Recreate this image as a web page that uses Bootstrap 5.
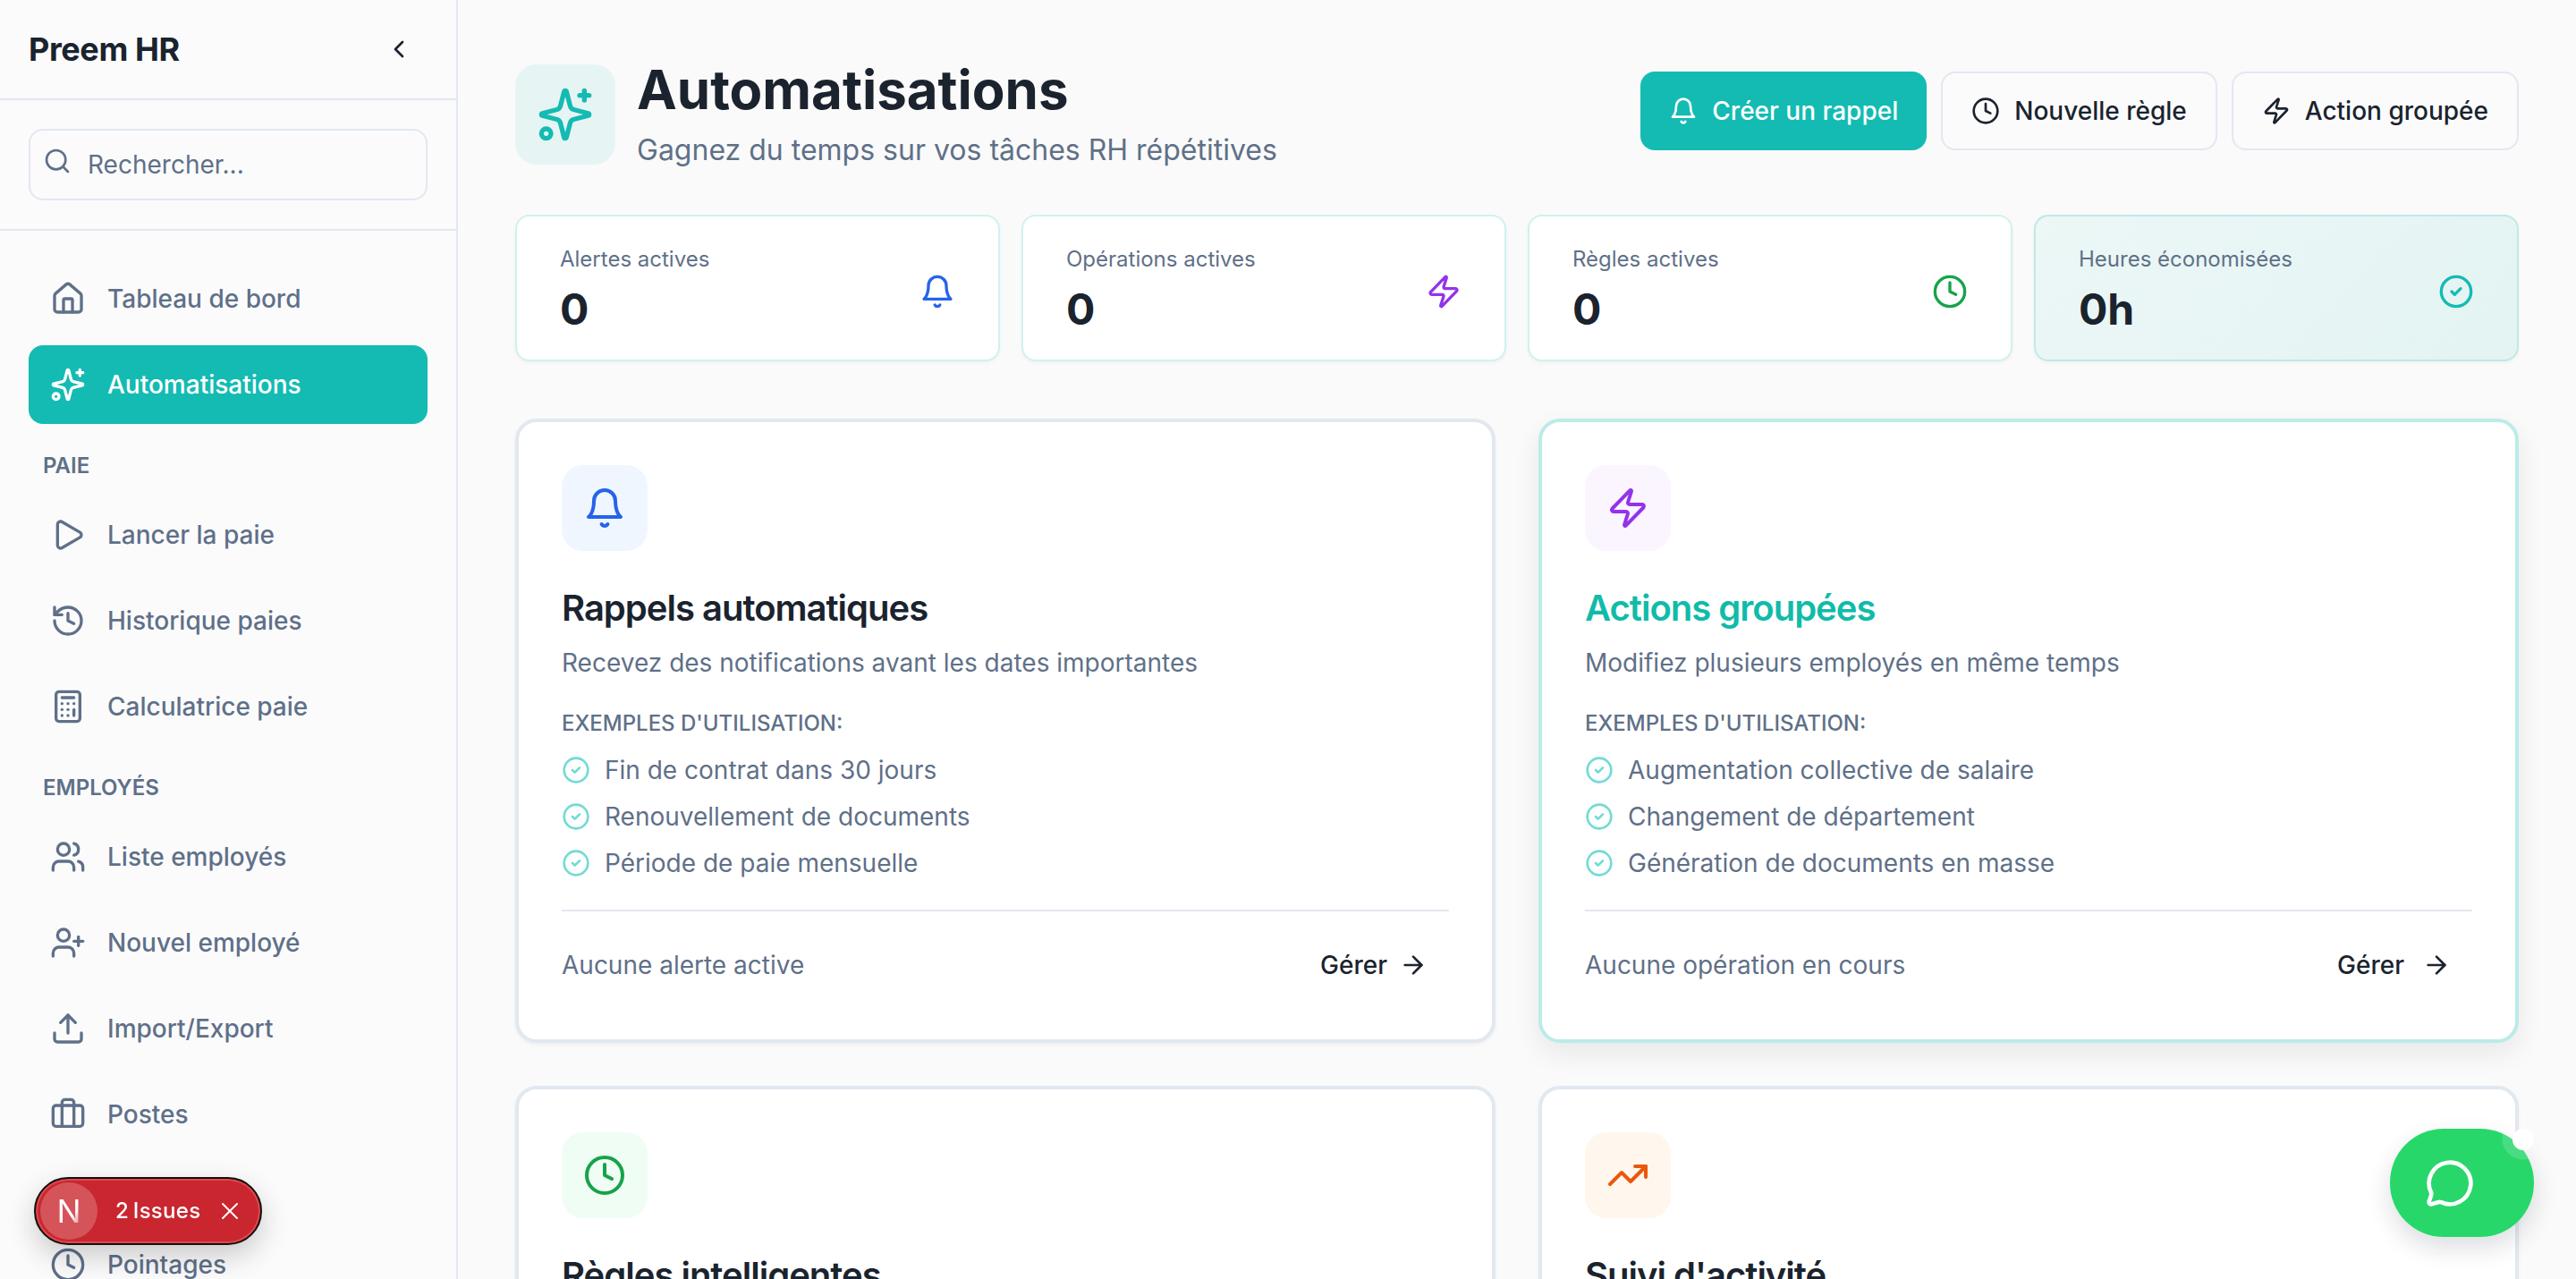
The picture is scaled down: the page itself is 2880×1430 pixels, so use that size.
<!DOCTYPE html>
<html lang="fr">
<head>
  <meta charset="UTF-8">
  <meta name="viewport" content="width=device-width, initial-scale=1">
  <link href="https://cdn.jsdelivr.net/npm/bootstrap@5.3.0/dist/css/bootstrap.min.css" rel="stylesheet">
  <title>Preem HR - Automatisations</title>
  <style>
    html, body { height: 100%; }
    body {
      background: #fafafa;
      color: #1a232e;
      font-family: Inter, "Liberation Sans", sans-serif;
      overflow: hidden;
    }
    .ico { fill: none; stroke: currentColor; stroke-width: 2; stroke-linecap: round; stroke-linejoin: round; flex-shrink: 0; }
    .ico-32 { width: 32px; height: 32px; }
    .ico-40 { width: 40px; height: 40px; }
    .ico-48 { width: 48px; height: 48px; }
    .ico-56 { width: 56px; height: 56px; }
    .ico-64 { width: 64px; height: 64px; }
    .ico-thin { stroke-width: 1.5; }
    .tone-blue { color: #2563eb; }
    .tone-purple { color: #9333ea; }
    .tone-green { color: #16a34a; }
    .tone-teal { color: #14bbb3; }

    /* sidebar */
    .side-panel { width: 512px; height: 1430px; border-right: 2px solid #e2e8f0; background: #fbfbfc; overflow: hidden; }
    .side-head { height: 112px; padding: 0 48px 0 32px; border-bottom: 2px solid #e2e8f0; }
    .side-brand { font-size: 36px; font-weight: 700; letter-spacing: -0.4px; }
    .side-search { height: 146px; padding: 32px; border-bottom: 2px solid #e2e8f0; }
    .search-box { height: 80px; border: 2px solid #e2e8f0; border-radius: 16px; padding-left: 14px; gap: 18px; color: #5f7088; font-size: 28px; }
    .search-box .ico { width: 32px; height: 32px; margin-top: -8px; }
    .side-nav { padding: 32px 32px 0; }
    .nav-entry { height: 88px; padding: 0 24px; gap: 24px; margin-bottom: 8px; border-radius: 16px; color: #5f7088; font-size: 28px; font-weight: 500; text-decoration: none; }
    .nav-entry.is-active { background: #14bbb3; color: #fff; }
    .nav-title { height: 40px; margin: 27px 0 13px; padding-left: 16px; font-size: 24px; line-height: 40px; font-weight: 600; color: #5f7088; }

    /* main */
    .main-area { padding: 72px 64px 0; height: 1430px; overflow: hidden; }
    .head-icon { width: 112px; height: 112px; border-radius: 24px; background: #e6f5f4; color: #14bbb3; }
    .page-title { font-size: 60px; line-height: 72px; font-weight: 700; margin: -8px 0 0; }
    .page-sub { font-size: 32px; line-height: 48px; color: #5f7088; margin: 8px 0 0; }
    .act-btn { height: 88px; padding: 0 32px; gap: 16px; font-size: 28px; font-weight: 500; border: 2px solid #e2e8f0; border-radius: 16px; background: #fbfbfc; color: #1a232e; margin-top: 8px; }
    .act-btn.is-main { background: #14bbb3; border: 0; color: #fff; }
    .stat-grid { display: grid; grid-template-columns: repeat(4, 1fr); gap: 24px; margin-top: 48px; }
    .stat-box { height: 164px; border: 2px solid #d0f1ef; border-radius: 16px; background: #fff; padding: 32px 48px 0; box-shadow: 0 2px 4px rgba(15, 23, 42, .04); }
    .stat-box.is-tint { background: linear-gradient(135deg, #ecf7f6, #e3f4f3); border-color: #bfe9e7; }
    .stat-label { font-size: 24px; line-height: 32px; color: #5f7088; }
    .stat-value { font-size: 48px; line-height: 64px; font-weight: 700; margin-top: 8px; }
    .stat-box .ico { margin-top: 32px; }
    .tool-grid { display: grid; grid-template-columns: repeat(2, 1fr); gap: 48px; margin-top: 64px; }
    .tool-box { height: 698px; border: 4px solid #e2e8f0; border-radius: 24px; background: #fff; padding: 48px; box-shadow: 0 2px 4px rgba(15, 23, 42, .05); }
    .tool-box.is-hover { border-color: #bcebe8; box-shadow: 0 12px 30px rgba(15, 23, 42, .08); }
    .tool-icon { width: 96px; height: 96px; border-radius: 24px; }
    .tint-blue { background: #eff6ff; color: #2563eb; }
    .tint-purple { background: #faf5ff; color: #9333ea; }
    .tint-green { background: #f0fdf4; color: #16a34a; }
    .tint-orange { background: #fff7ed; color: #ea580c; }
    .tool-title { font-size: 40px; line-height: 56px; font-weight: 600; letter-spacing: -1px; margin: 36px 0 0; }
    .tool-box.is-hover .tool-title { color: #10bba9; }
    .tool-desc { font-size: 28px; line-height: 40px; color: #5f7088; margin: 13px 0 0; }
    .tool-eyebrow { font-size: 24px; line-height: 32px; font-weight: 500; color: #5f7088; text-transform: uppercase; margin-top: 32px; }
    .tool-list { list-style: none; padding: 0; margin: 10px 0 0; }
    .tool-list li { height: 52px; gap: 16px; font-size: 28px; color: #5f7088; }
    .tool-list .ico { color: #72dbd5; }
    .tool-foot { border-top: 2px solid #e2e8f0; margin-top: 26px; padding-top: 28px; font-size: 28px; color: #5f7088; }
    .tool-link { height: 64px; padding: 0 24px; gap: 13px; color: #1a232e; font-weight: 500; text-decoration: none; }
    .tool-box.is-hover .tool-link { gap: 20px; }

    /* floating */
    .issue-pill { position: fixed; left: 38px; top: 1316px; width: 255px; height: 76px; border-radius: 38px; background: #c9262f; border: 2px solid #111; box-shadow: inset 0 0 0 2px #e0484f, 0 12px 32px rgba(0, 0, 0, .2); color: #fff; padding-left: 5px; font-size: 24px; font-weight: 500; }
    .issue-logo { width: 64px; height: 64px; border-radius: 50%; background: #d5545a; margin-right: 20px; }
    .issue-n { font-size: 36px; font-weight: 400; background: linear-gradient(125deg, #fff 62%, rgba(255, 255, 255, .25) 85%); -webkit-background-clip: text; background-clip: text; -webkit-text-fill-color: transparent; }
    .issue-count { letter-spacing: .3px; word-spacing: -2px; margin-right: 17px; }
    .chat-fab { position: fixed; left: 2672px; top: 1262px; width: 161px; height: 121px; border-radius: 60px; background: radial-gradient(circle at 149px 11px, #48dd82 23px, #28d76a 24px); color: #fff; box-shadow: 0 12px 28px rgba(15, 23, 42, .14); padding-left: 39px; }
    .chat-fab::after { content: ""; position: absolute; right: 0; top: 0; width: 24px; height: 24px; border-radius: 50%; background: #fff; }
  </style>
</head>
<body>

<svg width="0" height="0" class="position-absolute">
  <symbol id="i-home" viewBox="0 0 24 24"><path d="M15 21v-8a1 1 0 0 0-1-1h-4a1 1 0 0 0-1 1v8"/><path d="M3 10a2 2 0 0 1 .709-1.528l7-5.999a2 2 0 0 1 2.582 0l7 5.999A2 2 0 0 1 21 10v9a2 2 0 0 1-2 2H5a2 2 0 0 1-2-2z"/></symbol>
  <symbol id="i-sparkles" viewBox="0 0 24 24"><path d="M9.937 15.5A2 2 0 0 0 8.5 14.063l-6.135-1.582a.5.5 0 0 1 0-.962L8.5 9.936A2 2 0 0 0 9.937 8.5l1.582-6.135a.5.5 0 0 1 .963 0L14.063 8.5A2 2 0 0 0 15.5 9.937l6.135 1.581a.5.5 0 0 1 0 .964L15.5 14.063a2 2 0 0 0-1.437 1.437l-1.582 6.135a.5.5 0 0 1-.963 0z"/><path d="M20 2v4"/><path d="M22 4h-4"/><circle cx="4" cy="20" r="2"/></symbol>
  <symbol id="i-play" viewBox="0 0 24 24"><path d="M5 5a2 2 0 0 1 3.008-1.728l11.997 6.998a2 2 0 0 1 .003 3.458l-12 7A2 2 0 0 1 5 19z"/></symbol>
  <symbol id="i-history" viewBox="0 0 24 24"><path d="M3 12a9 9 0 1 0 9-9 9.75 9.75 0 0 0-6.74 2.74L3 8"/><path d="M3 3v5h5"/><path d="M12 7v5l4 2"/></symbol>
  <symbol id="i-calc" viewBox="0 0 24 24"><rect width="16" height="20" x="4" y="2" rx="2"/><line x1="8" x2="16" y1="6" y2="6"/><line x1="16" x2="16" y1="14" y2="18"/><path d="M16 10h.01"/><path d="M12 10h.01"/><path d="M8 10h.01"/><path d="M12 14h.01"/><path d="M8 14h.01"/><path d="M12 18h.01"/><path d="M8 18h.01"/></symbol>
  <symbol id="i-users" viewBox="0 0 24 24"><path d="M16 21v-2a4 4 0 0 0-4-4H6a4 4 0 0 0-4 4v2"/><circle cx="9" cy="7" r="4"/><path d="M22 21v-2a4 4 0 0 0-3-3.87"/><path d="M16 3.13a4 4 0 0 1 0 7.75"/></symbol>
  <symbol id="i-userplus" viewBox="0 0 24 24"><path d="M16 21v-2a4 4 0 0 0-4-4H6a4 4 0 0 0-4 4v2"/><circle cx="9" cy="7" r="4"/><line x1="19" x2="19" y1="8" y2="14"/><line x1="22" x2="16" y1="11" y2="11"/></symbol>
  <symbol id="i-upload" viewBox="0 0 24 24"><path d="M21 15v4a2 2 0 0 1-2 2H5a2 2 0 0 1-2-2v-4"/><polyline points="17 8 12 3 7 8"/><line x1="12" x2="12" y1="3" y2="15"/></symbol>
  <symbol id="i-case" viewBox="0 0 24 24"><path d="M16 20V4a2 2 0 0 0-2-2h-4a2 2 0 0 0-2 2v16"/><rect width="20" height="14" x="2" y="6" rx="2"/></symbol>
  <symbol id="i-clock" viewBox="0 0 24 24"><circle cx="12" cy="12" r="10"/><polyline points="12 6 12 12 16 14"/></symbol>
  <symbol id="i-bell" viewBox="0 0 24 24"><path d="M6 8a6 6 0 0 1 12 0c0 7 3 9 3 9H3s3-2 3-9"/><path d="M10.3 21a1.94 1.94 0 0 0 3.4 0"/></symbol>
  <symbol id="i-zap" viewBox="0 0 24 24"><path d="M4 14a1 1 0 0 1-.78-1.63l9.9-10.2a.5.5 0 0 1 .86.46l-1.92 6.02A1 1 0 0 0 13 10h7a1 1 0 0 1 .78 1.63l-9.9 10.2a.5.5 0 0 1-.86-.46l1.92-6.02A1 1 0 0 0 11 14z"/></symbol>
  <symbol id="i-check" viewBox="0 0 24 24"><circle cx="12" cy="12" r="10"/><path d="m9 12 2 2 4-4"/></symbol>
  <symbol id="i-arrow" viewBox="0 0 24 24"><path d="M5 12h14"/><path d="m12 5 7 7-7 7"/></symbol>
  <symbol id="i-trend" viewBox="0 0 24 24"><polyline points="22 7 13.5 15.5 8.5 10.5 2 17"/><polyline points="16 7 22 7 22 13"/></symbol>
  <symbol id="i-chat" viewBox="0 0 24 24"><path d="M2.992 16.342a2 2 0 0 1 .094 1.167l-1.065 3.29a1 1 0 0 0 1.236 1.168l3.413-.998a2 2 0 0 1 1.099.092 10 10 0 1 0-4.777-4.719"/></symbol>
  <symbol id="i-search" viewBox="0 0 24 24"><circle cx="11" cy="11" r="8"/><path d="m21 21-4.3-4.3"/></symbol>
  <symbol id="i-chevron" viewBox="0 0 24 24"><path d="m15 18-6-6 6-6"/></symbol>
  <symbol id="i-x" viewBox="0 0 24 24"><path d="M18 6 6 18"/><path d="m6 6 12 12"/></symbol>
</svg>

<div class="d-flex">
  <aside class="side-panel flex-shrink-0">
    <div class="side-head d-flex align-items-center justify-content-between">
      <span class="side-brand">Preem HR</span>
      <svg class="ico ico-32"><use href="#i-chevron"/></svg>
    </div>
    <div class="side-search">
      <div class="search-box d-flex align-items-center">
        <svg class="ico"><use href="#i-search"/></svg>
        <span>Rechercher...</span>
      </div>
    </div>
    <nav class="side-nav">
      <a class="nav-entry d-flex align-items-center" href="#"><svg class="ico ico-40"><use href="#i-home"/></svg>Tableau de bord</a>
      <a class="nav-entry is-active d-flex align-items-center" href="#"><svg class="ico ico-40"><use href="#i-sparkles"/></svg>Automatisations</a>
      <div class="nav-title">PAIE</div>
      <a class="nav-entry d-flex align-items-center" href="#"><svg class="ico ico-40"><use href="#i-play"/></svg>Lancer la paie</a>
      <a class="nav-entry d-flex align-items-center" href="#"><svg class="ico ico-40"><use href="#i-history"/></svg>Historique paies</a>
      <a class="nav-entry d-flex align-items-center" href="#"><svg class="ico ico-40"><use href="#i-calc"/></svg>Calculatrice paie</a>
      <div class="nav-title">EMPLOYÉS</div>
      <a class="nav-entry d-flex align-items-center" href="#"><svg class="ico ico-40"><use href="#i-users"/></svg>Liste employés</a>
      <a class="nav-entry d-flex align-items-center" href="#"><svg class="ico ico-40"><use href="#i-userplus"/></svg>Nouvel employé</a>
      <a class="nav-entry d-flex align-items-center" href="#"><svg class="ico ico-40"><use href="#i-upload"/></svg>Import/Export</a>
      <a class="nav-entry d-flex align-items-center" href="#"><svg class="ico ico-40"><use href="#i-case"/></svg>Postes</a>
      <div class="nav-title"></div>
      <a class="nav-entry d-flex align-items-center" href="#"><svg class="ico ico-40"><use href="#i-clock"/></svg>Pointages</a>
    </nav>
  </aside>

  <main class="main-area flex-grow-1">
    <div class="d-flex justify-content-between align-items-start">
      <div class="d-flex gap-4">
        <div class="head-icon d-flex align-items-center justify-content-center"><svg class="ico ico-64"><use href="#i-sparkles"/></svg></div>
        <div>
          <h1 class="page-title">Automatisations</h1>
          <p class="page-sub">Gagnez du temps sur vos tâches RH répétitives</p>
        </div>
      </div>
      <div class="d-flex gap-3">
        <button class="act-btn is-main d-flex align-items-center" type="button"><svg class="ico ico-32"><use href="#i-bell"/></svg>Créer un rappel</button>
        <button class="act-btn d-flex align-items-center" type="button"><svg class="ico ico-32"><use href="#i-clock"/></svg>Nouvelle règle</button>
        <button class="act-btn d-flex align-items-center" type="button"><svg class="ico ico-32"><use href="#i-zap"/></svg>Action groupée</button>
      </div>
    </div>

    <div class="stat-grid">
      <div class="stat-box d-flex justify-content-between align-items-start">
        <div><div class="stat-label">Alertes actives</div><div class="stat-value">0</div></div>
        <svg class="ico ico-40 tone-blue"><use href="#i-bell"/></svg>
      </div>
      <div class="stat-box d-flex justify-content-between align-items-start">
        <div><div class="stat-label">Opérations actives</div><div class="stat-value">0</div></div>
        <svg class="ico ico-40 tone-purple"><use href="#i-zap"/></svg>
      </div>
      <div class="stat-box d-flex justify-content-between align-items-start">
        <div><div class="stat-label">Règles actives</div><div class="stat-value">0</div></div>
        <svg class="ico ico-40 tone-green"><use href="#i-clock"/></svg>
      </div>
      <div class="stat-box is-tint d-flex justify-content-between align-items-start">
        <div><div class="stat-label">Heures économisées</div><div class="stat-value">0h</div></div>
        <svg class="ico ico-40 tone-teal"><use href="#i-check"/></svg>
      </div>
    </div>

    <div class="tool-grid">
      <div class="tool-box">
        <div class="tool-icon tint-blue d-flex align-items-center justify-content-center"><svg class="ico ico-48"><use href="#i-bell"/></svg></div>
        <h2 class="tool-title">Rappels automatiques</h2>
        <p class="tool-desc">Recevez des notifications avant les dates importantes</p>
        <div class="tool-eyebrow">Exemples d'utilisation:</div>
        <ul class="tool-list">
          <li class="d-flex align-items-center"><svg class="ico ico-32"><use href="#i-check"/></svg>Fin de contrat dans 30 jours</li>
          <li class="d-flex align-items-center"><svg class="ico ico-32"><use href="#i-check"/></svg>Renouvellement de documents</li>
          <li class="d-flex align-items-center"><svg class="ico ico-32"><use href="#i-check"/></svg>Période de paie mensuelle</li>
        </ul>
        <div class="tool-foot d-flex justify-content-between align-items-center">
          <span>Aucune alerte active</span>
          <a class="tool-link d-flex align-items-center" href="#">Gérer<svg class="ico ico-32"><use href="#i-arrow"/></svg></a>
        </div>
      </div>
      <div class="tool-box is-hover">
        <div class="tool-icon tint-purple d-flex align-items-center justify-content-center"><svg class="ico ico-48"><use href="#i-zap"/></svg></div>
        <h2 class="tool-title">Actions groupées</h2>
        <p class="tool-desc">Modifiez plusieurs employés en même temps</p>
        <div class="tool-eyebrow">Exemples d'utilisation:</div>
        <ul class="tool-list">
          <li class="d-flex align-items-center"><svg class="ico ico-32"><use href="#i-check"/></svg>Augmentation collective de salaire</li>
          <li class="d-flex align-items-center"><svg class="ico ico-32"><use href="#i-check"/></svg>Changement de département</li>
          <li class="d-flex align-items-center"><svg class="ico ico-32"><use href="#i-check"/></svg>Génération de documents en masse</li>
        </ul>
        <div class="tool-foot d-flex justify-content-between align-items-center">
          <span>Aucune opération en cours</span>
          <a class="tool-link d-flex align-items-center" href="#">Gérer<svg class="ico ico-32"><use href="#i-arrow"/></svg></a>
        </div>
      </div>
      <div class="tool-box">
        <div class="tool-icon tint-green d-flex align-items-center justify-content-center"><svg class="ico ico-48"><use href="#i-clock"/></svg></div>
        <h2 class="tool-title">Règles intelligentes</h2>
      </div>
      <div class="tool-box">
        <div class="tool-icon tint-orange d-flex align-items-center justify-content-center"><svg class="ico ico-48"><use href="#i-trend"/></svg></div>
        <h2 class="tool-title">Suivi d'activité</h2>
      </div>
    </div>
  </main>
</div>

<div class="issue-pill d-flex align-items-center">
  <span class="issue-logo d-flex align-items-center justify-content-center"><span class="issue-n">N</span></span>
  <span class="issue-count">2 Issues</span>
  <svg class="ico ico-32 ico-thin"><use href="#i-x"/></svg>
</div>
<div class="chat-fab d-flex align-items-center">
  <svg class="ico ico-56"><use href="#i-chat"/></svg>
</div>

<script src="https://cdn.jsdelivr.net/npm/bootstrap@5.3.0/dist/js/bootstrap.bundle.min.js"></script>
</body>
</html>
